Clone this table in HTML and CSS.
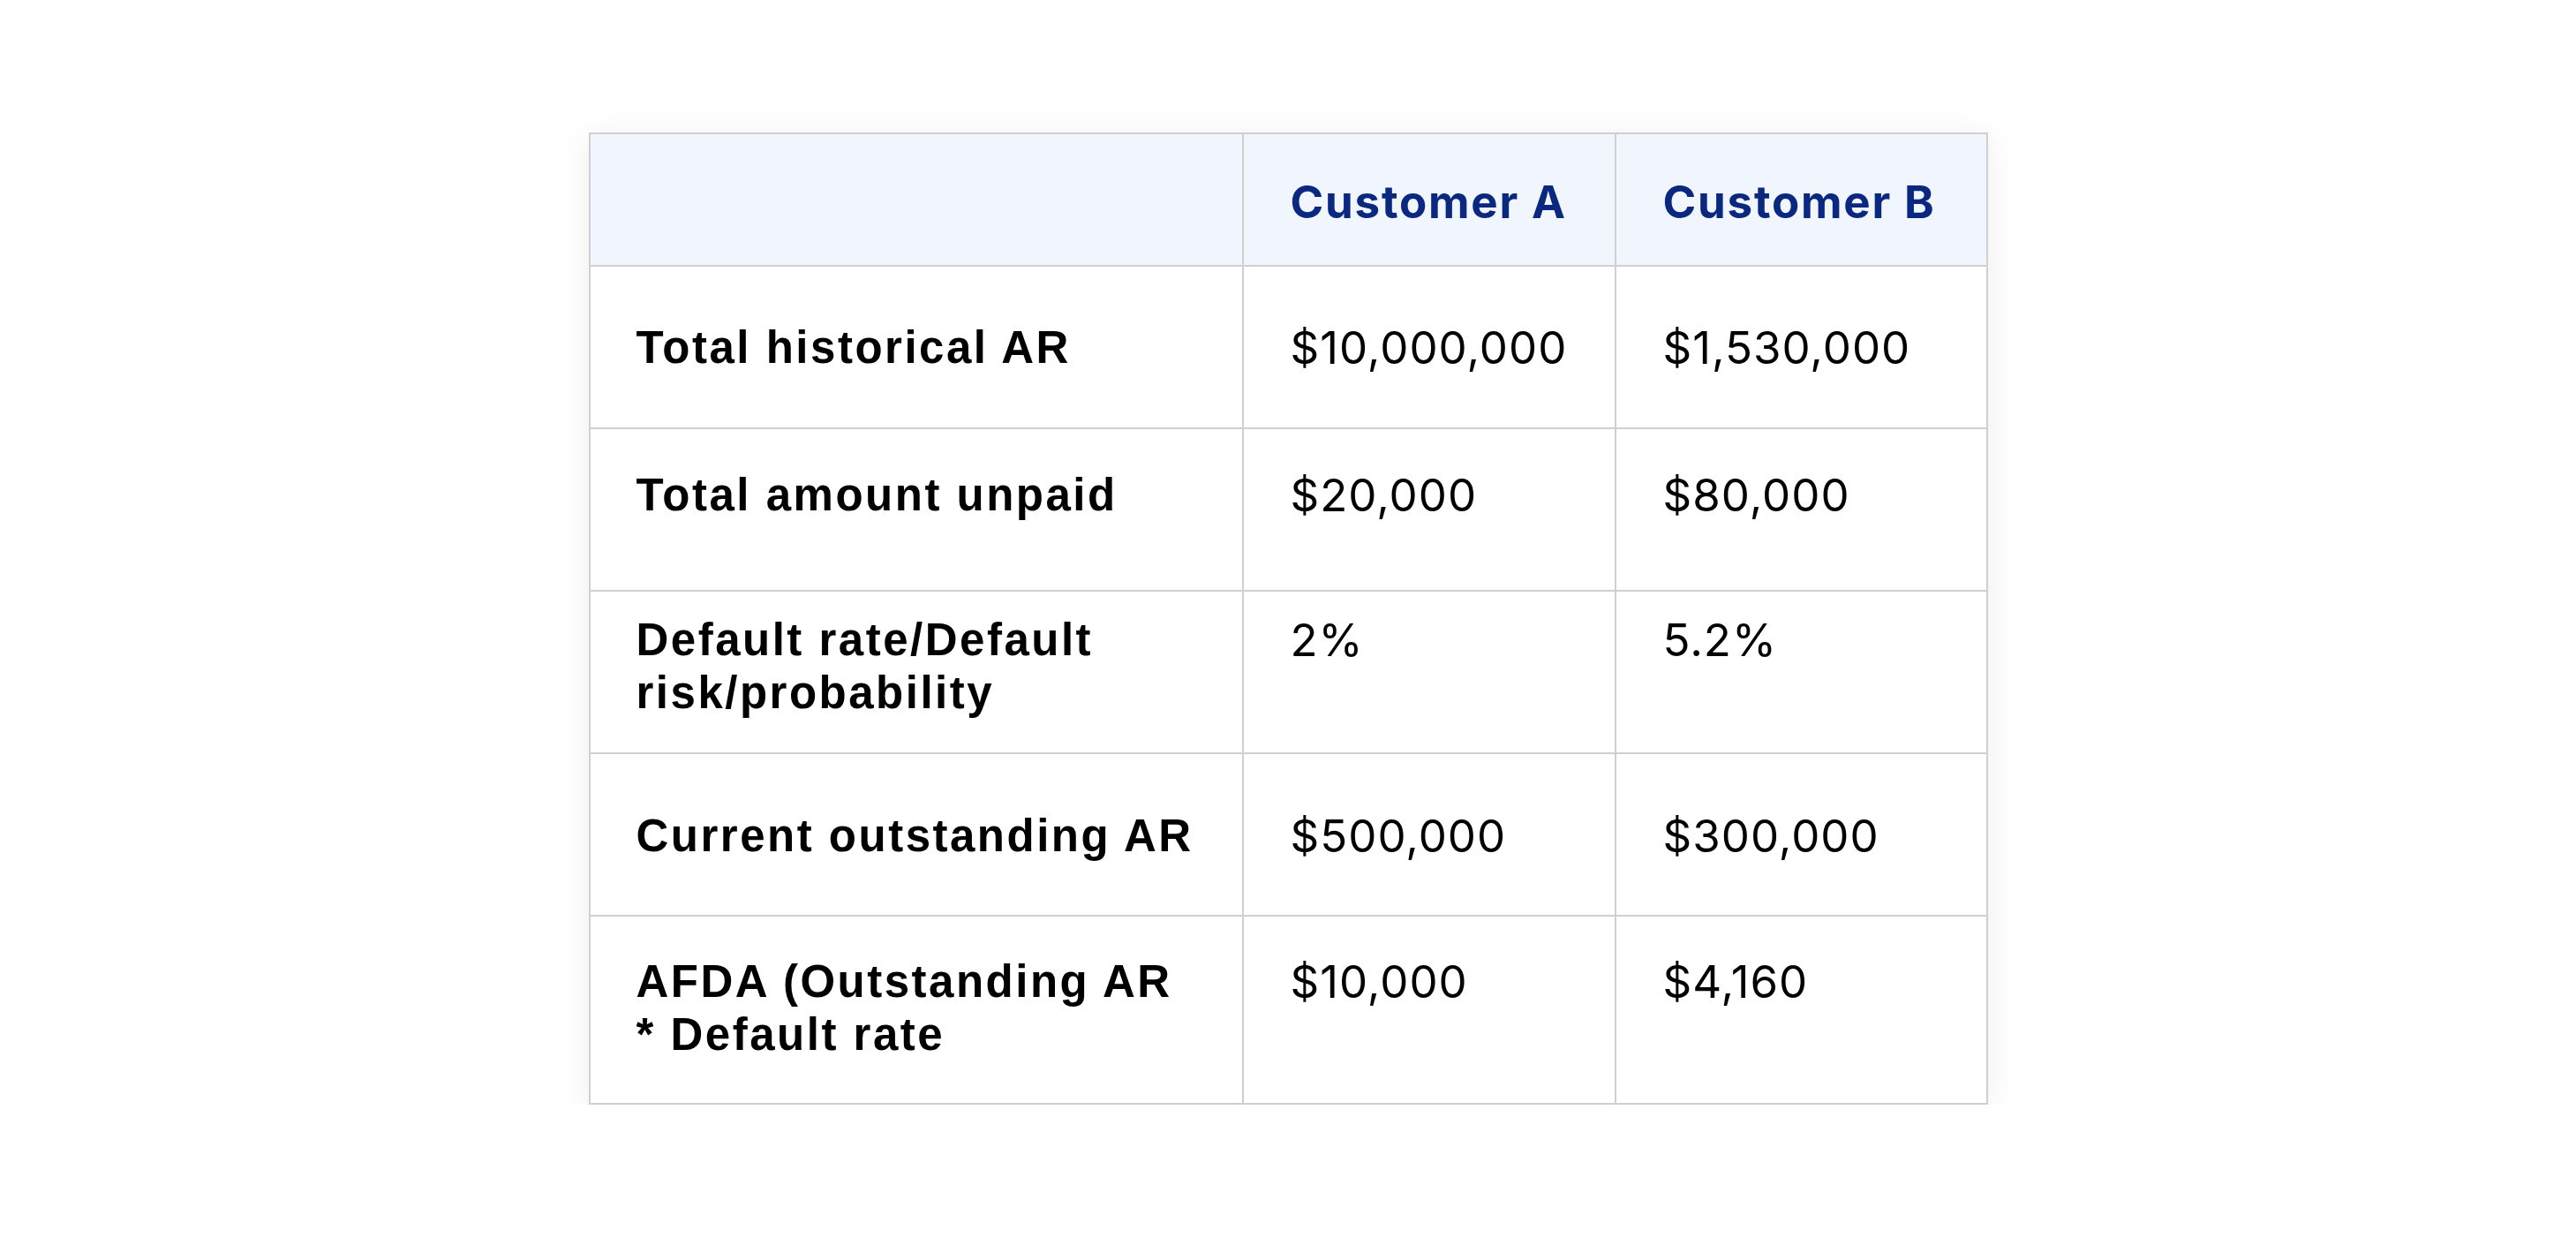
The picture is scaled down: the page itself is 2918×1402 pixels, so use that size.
FILE: index.html
```html
<!DOCTYPE html>
<html lang="en">
<head>
<meta charset="utf-8">
<title>AFDA comparison</title>
<link rel="stylesheet" href="styles.css">
</head>
<body>
<main class="page">
  <div class="table">
    <div class="cell head"></div>
    <div class="cell head col">Customer A</div>
    <div class="cell head col">Customer B</div>

    <div class="cell label r1">Total historical AR</div>
    <div class="cell value r1">$10,000,000</div>
    <div class="cell value r1">$1,530,000</div>

    <div class="cell label r2">Total amount unpaid</div>
    <div class="cell value r2">$20,000</div>
    <div class="cell value r2">$80,000</div>

    <div class="cell label top r3">Default rate/Default<br>risk/probability</div>
    <div class="cell value top r3">2%</div>
    <div class="cell value top r3">5.2%</div>

    <div class="cell label r4">Current outstanding AR</div>
    <div class="cell value r4">$500,000</div>
    <div class="cell value r4">$300,000</div>

    <div class="cell label top r5">AFDA (Outstanding AR<br>* Default rate</div>
    <div class="cell value top r5">$10,000</div>
    <div class="cell value top r5">$4,160</div>
  </div>
</main>
</body>
</html>
```

FILE: styles.css
```css
html, body {
  margin: 0;
  padding: 0;
  background: #ffffff;
}

.page {
  display: flex;
  justify-content: center;
  padding-top: 150px;
}

.table {
  display: grid;
  grid-template-columns: 738px 420px 419px;
  grid-template-rows: 148px 182px 182px 182px 182px 211px;
  gap: 2px;
  padding: 2px;
  background: #d0d0d0;
  box-shadow: 0 6px 36px rgba(0, 0, 0, 0.07);
}

.cell {
  background: #ffffff;
  display: flex;
  align-items: center;
  padding-left: 52px;
  font-size: 51px;
  line-height: 60px;
  color: #000000;
}

.head {
  background: #f1f5fd;
}

.col {
  font-family: Inter, "Liberation Sans", sans-serif;
  font-weight: 700;
  letter-spacing: 1.8px;
  color: #0a2880;
  padding-left: 53px;
  padding-top: 6px;
}

.label {
  font-family: "Liberation Sans", Arial, sans-serif;
  font-weight: 700;
  letter-spacing: 2.5px;
}

.value {
  font-family: Inter, "Liberation Sans", sans-serif;
  font-weight: 400;
  letter-spacing: 1px;
  padding-left: 53px;
}

.r1 {
  padding-top: 2px;
}

.r2 {
  padding-bottom: 32px;
}

.r4 {
  padding-top: 4px;
}

.top {
  align-items: flex-start;
}

.r3 {
  padding-top: 25px;
}

.r5 {
  padding-top: 44px;
}
```
